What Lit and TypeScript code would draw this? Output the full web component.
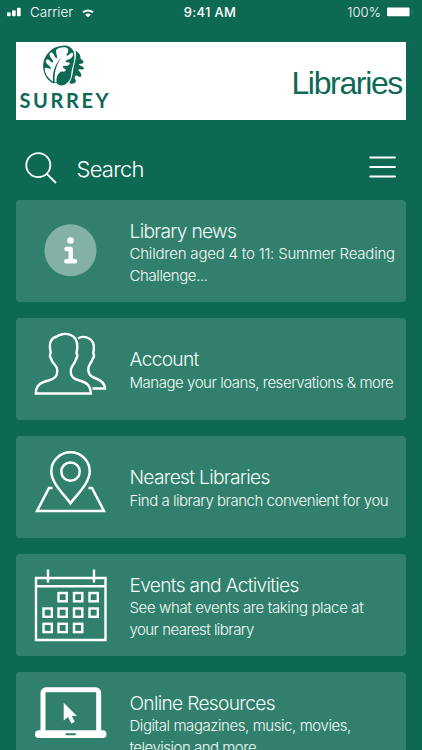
import { LitElement, html, css, svg } from "lit";
import { customElement, property } from "lit/decorators.js";
import { styleMap } from "lit/directives/style-map.js";

const calendarDays = [
  [43, 39], [58.5, 39], [74, 39],
  [28, 54.5], [43, 54.5], [58.5, 54.5], [74, 54.5],
  [28, 69.8], [43, 69.8], [58.5, 69.8],
];

const icons: Record<string, unknown> = {
  info: svg`<circle cx="55" cy="50.3" r="26" fill="#83b1a5"/>
    <circle cx="55" cy="40.5" r="3.3" fill="#fff"/>
    <path d="M51 49H55.2V61M50.8 61.2H59.6" fill="none" stroke="#fff" stroke-width="4.4" stroke-linecap="round" stroke-linejoin="round"/>`,
  account: svg`<g fill="none" stroke="#fff" stroke-width="2.4">
    <path d="M20.3 75.5C20.3 66 27 64 33 62.5C39.5 60.5 41.8 58.5 41.8 52.5C41.8 46.5 36.5 46 35.8 41C34 39 34 37 35.3 34.5C32.5 24 36.5 19.5 41.5 18.5C46 14.5 62.5 13 61.8 30L61 35C62.7 38 61.5 40 60.3 41.5C59.5 46.5 55.2 47 55.2 53C55.2 59 58 61 64 62.5C71 64.5 75 67 75.3 75.5Z"/>
    <path d="M62.5 20.5C67 17.5 79.5 18.5 78.3 31.5L77.8 35C79 37.5 78.5 39.5 77 41C76 45.5 72.8 46 72.8 51.5C72.8 56.5 75 58.5 80.5 60.5C86.5 62.7 89.3 65.5 89.5 70.5H77"/></g>`,
  nearest: svg`<g fill="none" stroke="#fff" stroke-width="2.5">
    <path d="M55 67.3C49 59 35.8 47 35.8 35.5A19.2 19.2 0 0 1 74.2 35.5C74.2 47 61 59 55 67.3Z"/>
    <circle cx="55" cy="35.6" r="9.2"/><path d="M37 52H33.5L21.5 75H88.5L76.5 52H73"/></g>`,
  events: svg`<g fill="none" stroke="#fff" stroke-width="2.4">
    <path d="M20.5 24H90V86H20.5ZM20.5 32.3H90M32.5 15.5V28.5M78.5 15.5V28.5"/>
    ${calendarDays.map(([x, y]) => svg`<rect x=${x} y=${y} width="8.3" height="8.3"/>`)}</g>`,
  online: svg`<rect x="27.5" y="17.8" width="55.7" height="44" rx="3" fill="none" stroke="#fff" stroke-width="5"/>
    <rect x="19.5" y="58.3" width="71.5" height="7.7" rx="3.8" fill="#fff"/>
    <path d="M51 62.2H59.5" stroke="#31806d" stroke-width="2" stroke-linecap="round"/>
    <path d="M48.2 30.8V48.5L52.5 45L55.8 51.5L59.3 49.8L56.3 44H61.5Z" fill="#fff"/>`,
};

interface Line {
  text: string;
  tracking: number;
}

@customElement("menu-card")
class MenuCard extends LitElement {
  @property() icon = "";
  @property() heading = "";
  @property({ attribute: false }) lines: Line[] = [];
  static styles = css`
    :host { display: flex; align-items: center; height: 102px; flex: none; border-radius: 4px; background: #31806d; color: #f4faf8; }
    svg { width: 114px; height: 102px; flex: none; }
    h2 { margin: 0; font-size: 19.2px; line-height: 24px; font-weight: 300; letter-spacing: -0.7px; white-space: nowrap; }
    p { margin: 0; font-size: 15px; line-height: 21.5px; font-weight: 300; white-space: nowrap; }
    .copy { padding-top: 2.5px; }
    h2 + p { margin-top: 0.5px; }
  `;
  render() {
    return html`<svg viewBox="0.5 0 114 102">${icons[this.icon]}</svg>
      <div class="copy">
        <h2>${this.heading}</h2>
        ${this.lines.map((l) => html`<p style=${styleMap({ letterSpacing: `${l.tracking}px` })}>${l.text}</p>`)}
      </div>`;
  }
}

const cards = [
  { icon: "info", heading: "Library news", lines: [{ text: "Children aged 4 to 11: Summer Reading", tracking: -0.2 }, { text: "Challenge...", tracking: -0.4 }] },
  { icon: "account", heading: "Account", lines: [{ text: "Manage your loans, reservations & more", tracking: -0.46 }] },
  { icon: "nearest", heading: "Nearest Libraries", lines: [{ text: "Find a library branch convenient for you", tracking: -0.48 }] },
  { icon: "events", heading: "Events and Activities", lines: [{ text: "See what events are taking place at", tracking: -0.37 }, { text: "your nearest library", tracking: -0.55 }] },
  { icon: "online", heading: "Online Resources", lines: [{ text: "Digital magazines, music, movies,", tracking: -0.43 }, { text: "television and more", tracking: -0.5 }] },
];

@customElement("app-root")
class AppRoot extends LitElement {
  static styles = css`
    :host { display: flex; flex-direction: column; box-sizing: border-box; height: 750px; overflow: hidden; background: #0d6953; font-family: Inter, "Liberation Sans", sans-serif; color: #fff; }
    .status { display: grid; grid-template-columns: 1fr auto 1fr; align-items: center; height: 24px; padding: 0 9px 0 7px; font-size: 13px; flex: none; }
    .left, .right { display: flex; align-items: center; }
    .left { font-size: 13.5px; font-weight: 300; }
    .signal { margin-right: 9px; }
    .wifi { margin-left: 9px; margin-top: 2px; }
    .right { justify-content: flex-end; gap: 5px; font-weight: 300; letter-spacing: 0.1px; }
    .time { font-weight: 500; letter-spacing: 0.3px; }
    .banner { display: flex; justify-content: space-between; height: 78px; margin: 18px 16px 0 15.5px; background: #fff; color: #0d6953; flex: none; }
    .logo { width: 100px; height: 78px; fill: #0d6953; }
    .brand { font-family: Lato, sans-serif; font-size: 20px; font-weight: 700; }
    .title { align-self: center; padding: 5px 4px 0 0; font-family: "Liberation Sans", sans-serif; font-size: 32px; letter-spacing: -1.35px; }
    .search { display: flex; align-items: center; height: 80px; padding: 0 25px; flex: none; }
    .search span { flex: 1; padding: 18px 0 0 19.5px; font-size: 22px; font-weight: 300; letter-spacing: -0.75px; }
    .glass { width: 32px; height: 32px; margin-top: 16px; }
    .bars { width: 28px; height: 22px; margin-top: 14px; }
    .list { display: flex; flex-direction: column; gap: 16px; padding: 0 16px 0 15.5px; }
  `;
  render() {
    return html`
      <div class="status">
        <div class="left">
          <svg class="signal" width="14" height="10" viewBox="0 0 14 10" fill="#fff"><rect y="5.3" width="3.7" height="4" rx="1"/><rect x="5" y="3.3" width="3.7" height="6" rx="1"/><rect x="10" y="0.8" width="3.7" height="8.5" rx="1"/></svg>
          <span>Carrier</span>
          <svg class="wifi" width="12" height="9" viewBox="0 0 12 9"><path d="M1 3.3Q6 -0.3 11 3.3" fill="none" stroke="#fff" stroke-width="1.9"/><path d="M3 5.6Q6 3.6 9 5.6L6 8.2Z" fill="#fff"/></svg>
        </div>
        <div class="time">9:41 AM</div>
        <div class="right">
          <span>100%</span>
          <svg width="27" height="10" viewBox="0 0 27 10" fill="#fff"><rect x="1" y="0.5" width="22.5" height="8.7" rx="1"/><path d="M26 3.3V6.3" stroke="#458b7a"/></svg>
        </div>
      </div>
      <header class="banner">
        <svg class="logo" viewBox="0 0 100 78">
          <g transform="translate(24.5 1) scale(0.3333)">
            <path fill-rule="evenodd" d="M67 8C31 10 7 40 8 72C9 95 22 114 38 121L48 119C54 130 71 130 80 119C92 109 91 100 93 86C96 68 107 48 99 25C92 11 80 7 67 8ZM40 118C22 106 12 92 13 76C16 71 25 78 31 77C35 73 19 65 16 57C17 43 25 49 31 56C36 62 40 57 36 51C29 42 23 34 31 28C40 27 41 43 48 46C54 44 45 32 47 22C53 13 65 13 74 13C87 15 84 26 79 34C76 41 84 38 90 31C97 25 101 33 95 42C88 51 78 49 75 55C76 61 86 55 88 61C86 72 74 66 67 70C65 77 76 76 76 82C72 90 63 82 57 89C50 95 47 105 48 118Z"/>
            <path d="M63 43C44 64 34 88 38 119L43 120C40 97 45 68 63 43Z"/>
            <path d="M105 23C110 42 101 62 98 82C96 98 92 111 86 120C94 125 105 121 107 114C102 107 101 100 106 98C112 96 115 105 120 101C127 96 118 86 113 81C115 76 125 83 130 77C131 69 119 69 115 65C118 60 127 65 129 57C127 49 122 52 120 46C121 36 113 26 105 23Z"/>
          </g>
          <text class="brand" x="3.5" y="66" textLength="89">SURREY</text>
        </svg>
        <div class="title">Libraries</div>
      </header>
      <div class="search">
        <svg class="glass" viewBox="0 0 32 32" fill="none" stroke="#fff" stroke-width="1.8"><circle cx="13.3" cy="13.2" r="12"/><path d="M21.8 21.8L31 31"/></svg>
        <span>Search</span>
        <svg class="bars" viewBox="0 0 28 22" stroke="#fff" stroke-width="1.9" stroke-linecap="round"><path d="M1.2 1.5H26M1.2 11H26M1.2 20.5H26"/></svg>
      </div>
      <main class="list">${cards.map((c) => html`<menu-card icon=${c.icon} heading=${c.heading} .lines=${c.lines}></menu-card>`)}</main>`;
  }
}
